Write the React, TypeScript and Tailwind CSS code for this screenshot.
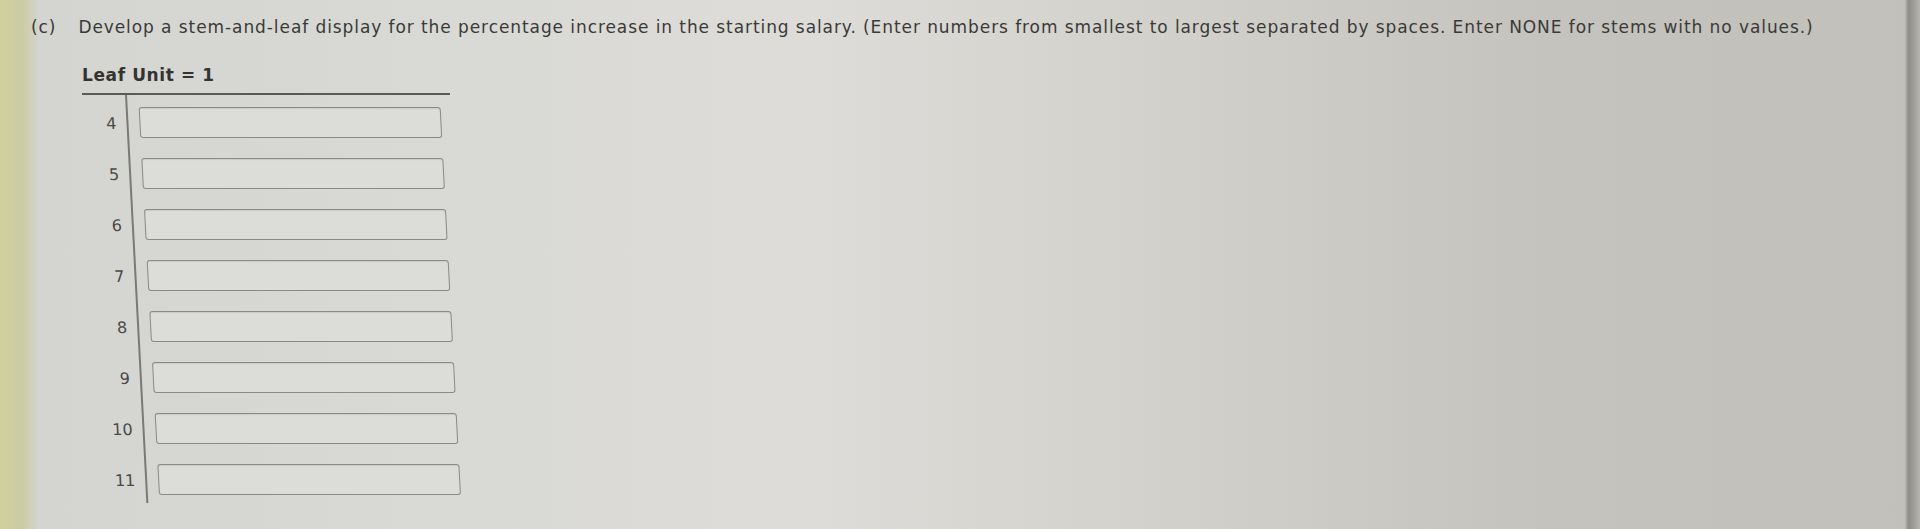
import React from 'react';

const stems = ['4', '5', '6', '7', '8', '9', '10', '11'];

export default function App() {
  return (
    <main
      className="flex h-[529px] w-[1920px] overflow-hidden bg-[linear-gradient(to_right,#cfcf9e_0%,#cccca4_1.2%,#d4d4d0_2%,#d8d8d5_20%,#dddcd8_42%,#d2d1cc_60%,#c4c3bd_80%,#c1c0ba_99.2%,#8e8d88_99.4%,#b5b4ae_100%)] text-[#3a3a38]"
      style={{ fontFamily: '"DejaVu Sans", Verdana, sans-serif' }}
    >
      <div className="flex flex-col pt-[16px]">
        <p className="ml-[31px] flex gap-[22px] whitespace-nowrap text-[17px] leading-[22px] tracking-[0.92px]">
          <span>(c)</span>
          <span>
            Develop a stem-and-leaf display for the percentage increase in the starting salary. (Enter numbers from
            smallest to largest separated by spaces. Enter NONE for stems with no values.)
          </span>
        </p>

        <div className="ml-[82px] mt-[26px] w-[368px]">
          <div className="pb-[7px] text-[17px] font-bold leading-[22px] tracking-[0.6px] text-[#333331]">
            Leaf Unit = 1
          </div>
          <div className="border-t-2 border-[#5a5a57]">
            <div className="flex origin-top skew-x-3">
              <div className="flex w-[45px] shrink-0 flex-col gap-[20px] border-r-2 border-[#7a7a75] pt-[12px] pb-[8px] pr-[10px]">
                {stems.map((s) => (
                  <div key={s} className="h-[31px] text-right text-[16px] leading-[33px] text-[#4a4a48]">
                    {s}
                  </div>
                ))}
              </div>
              <div className="flex flex-col gap-[20px] pt-[12px] pl-[11px]">
                {stems.map((s) => (
                  <input
                    key={s}
                    type="text"
                    aria-label={`leaves for stem ${s}`}
                    className="block h-[31px] w-[302px] rounded-[3px] border border-[#8a8a86] bg-[#dcdcd8] outline-none shadow-[inset_0_1px_1px_rgba(0,0,0,0.08)]"
                  />
                ))}
              </div>
            </div>
          </div>
        </div>
      </div>
    </main>
  );
}
